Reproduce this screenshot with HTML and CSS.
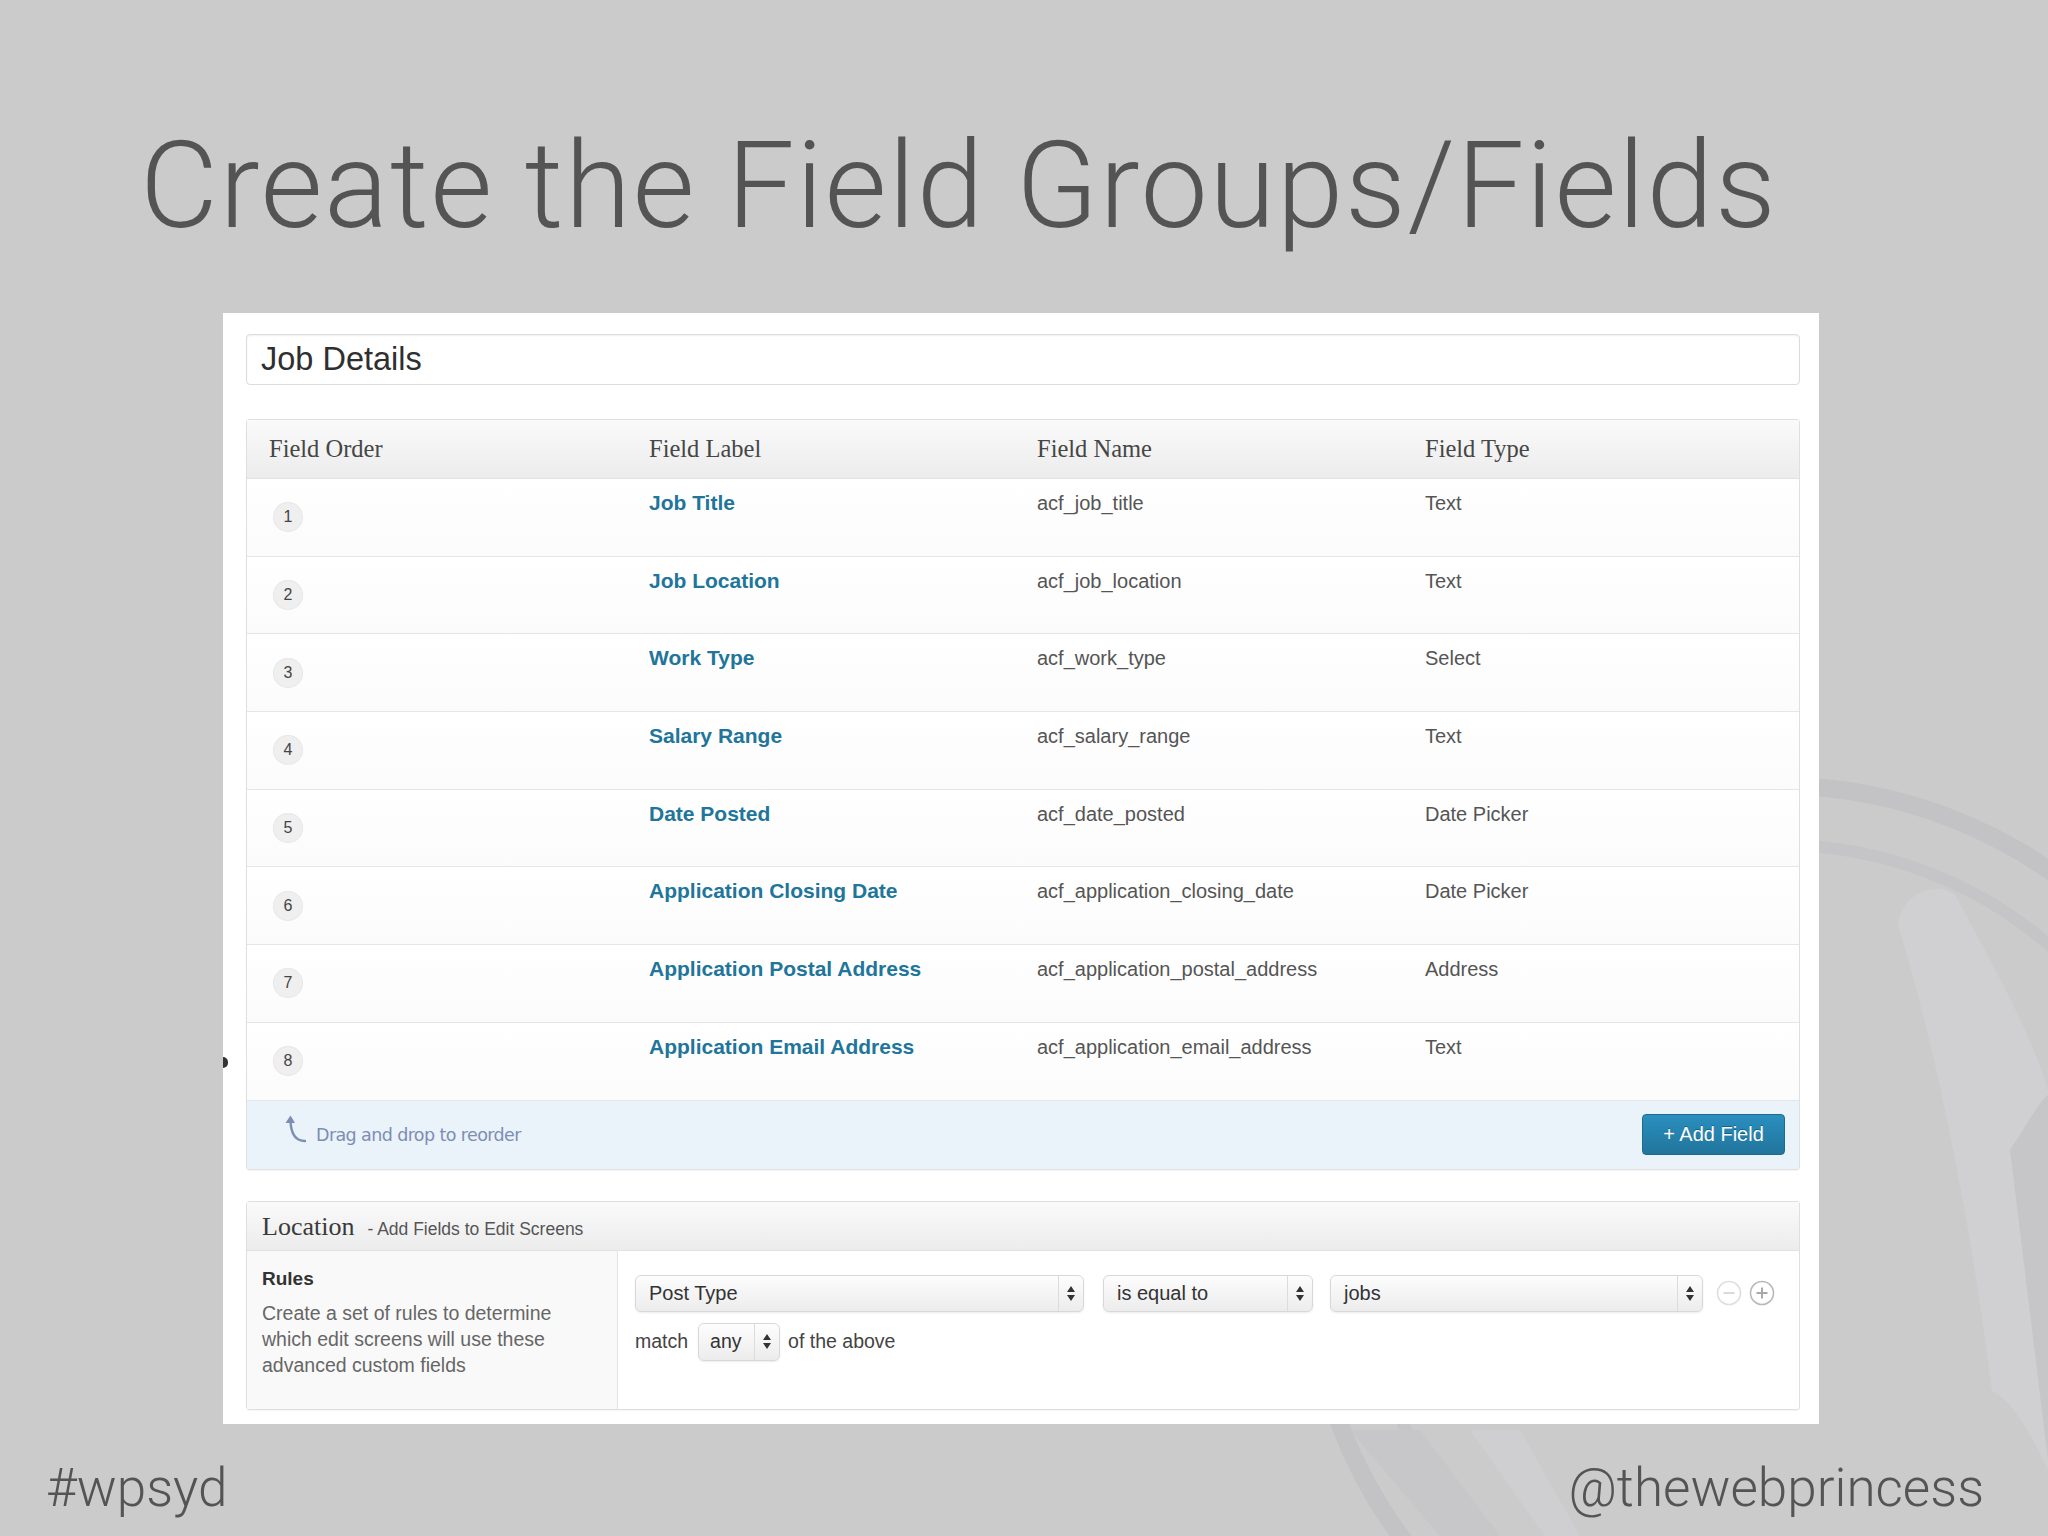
FILE: index.html
```html
<!DOCTYPE html>
<html lang="en">
<head>
<meta charset="utf-8">
<title>Create the Field Groups/Fields</title>
<link rel="stylesheet" href="styles.css">
</head>
<body>
<svg class="watermark" width="2048" height="1536" viewBox="0 0 2048 1536" aria-hidden="true">
  <circle cx="1780" cy="1257" r="471" fill="none" stroke="#c3c3c5" stroke-width="18"/>
  <circle cx="1780" cy="1257" r="412" fill="none" stroke="#c5c5c7" stroke-width="12"/>
  <path d="M1898 925 C1900 895 1935 880 1955 895 C1990 960 2030 1030 2048 1090 L2048 1470 C2025 1420 2005 1395 1992 1392 C1975 1250 1940 1060 1898 925 Z" fill="#d0d0d2"/>
  <path d="M2010 1150 C2030 1120 2040 1100 2048 1095 L2048 1460 Z" fill="#c6c6c8"/>
  <path d="M1350 1430 L1420 1430 L1500 1536 L1440 1536 Z" fill="#c7c7c9"/>
  <path d="M1470 1430 L1520 1430 L1580 1536 L1545 1536 Z" fill="#cfcfd1"/>
</svg>
<main class="slide">
  <h1 class="title">Create the Field Groups/Fields</h1>
  <section class="panel">
    <span class="edge-mark"></span>
    <div class="title-input">Job Details</div>

    <div class="fields">
      <div class="fields-head">
        <div class="cell first">Field Order</div>
        <div class="cell">Field Label</div>
        <div class="cell">Field Name</div>
        <div class="cell">Field Type</div>
      </div>

      <div class="field-row">
        <div class="cell first order"><span class="num">1</span></div>
        <div class="cell label">Job Title</div>
        <div class="cell">acf_job_title</div>
        <div class="cell">Text</div>
      </div>
      <div class="field-row">
        <div class="cell first order"><span class="num">2</span></div>
        <div class="cell label">Job Location</div>
        <div class="cell">acf_job_location</div>
        <div class="cell">Text</div>
      </div>
      <div class="field-row">
        <div class="cell first order"><span class="num">3</span></div>
        <div class="cell label">Work Type</div>
        <div class="cell">acf_work_type</div>
        <div class="cell">Select</div>
      </div>
      <div class="field-row">
        <div class="cell first order"><span class="num">4</span></div>
        <div class="cell label">Salary Range</div>
        <div class="cell">acf_salary_range</div>
        <div class="cell">Text</div>
      </div>
      <div class="field-row">
        <div class="cell first order"><span class="num">5</span></div>
        <div class="cell label">Date Posted</div>
        <div class="cell">acf_date_posted</div>
        <div class="cell">Date Picker</div>
      </div>
      <div class="field-row">
        <div class="cell first order"><span class="num">6</span></div>
        <div class="cell label">Application Closing Date</div>
        <div class="cell">acf_application_closing_date</div>
        <div class="cell">Date Picker</div>
      </div>
      <div class="field-row">
        <div class="cell first order"><span class="num">7</span></div>
        <div class="cell label">Application Postal Address</div>
        <div class="cell">acf_application_postal_address</div>
        <div class="cell">Address</div>
      </div>
      <div class="field-row">
        <div class="cell first order"><span class="num">8</span></div>
        <div class="cell label">Application Email Address</div>
        <div class="cell">acf_application_email_address</div>
        <div class="cell">Text</div>
      </div>

      <div class="fields-foot">
        <div class="drag">
          <svg class="drag-arrow" width="24" height="30" viewBox="0 0 24 30" aria-hidden="true">
            <path d="M22 27 C13 27 8 21 7.5 7" fill="none" stroke="#7d8db4" stroke-width="2.4" stroke-linecap="round"/>
            <path d="M2.5 9 L7.5 1.5 L12 9 Z" fill="#7d8db4"/>
          </svg>
          <span class="drag-text">Drag and drop to reorder</span>
        </div>
        <div class="add-btn">+ Add Field</div>
      </div>
    </div>

    <div class="location">
      <div class="loc-head">
        <span class="loc-title">Location</span>
        <span class="loc-sub">- Add Fields to Edit Screens</span>
      </div>
      <div class="loc-body">
        <div class="rules">
          <div class="rules-title">Rules</div>
          <p class="rules-desc">Create a set of rules to determine<br>which edit screens will use these<br>advanced custom fields</p>
        </div>
        <div class="rule-area">
          <div class="rule-line">
            <div class="select sel-param"><span class="sel-text">Post Type</span><span class="sel-arrow"><svg width="8" height="15" viewBox="0 0 8 15"><path d="M0 6 L4 0 L8 6 Z M0 9 L4 15 L8 9 Z" fill="#333"/></svg></span></div>
            <div class="select sel-op"><span class="sel-text">is equal to</span><span class="sel-arrow"><svg width="8" height="15" viewBox="0 0 8 15"><path d="M0 6 L4 0 L8 6 Z M0 9 L4 15 L8 9 Z" fill="#333"/></svg></span></div>
            <div class="select sel-val"><span class="sel-text">jobs</span><span class="sel-arrow"><svg width="8" height="15" viewBox="0 0 8 15"><path d="M0 6 L4 0 L8 6 Z M0 9 L4 15 L8 9 Z" fill="#333"/></svg></span></div>
            <svg class="round-btn minus" width="26" height="26" viewBox="0 0 26 26" aria-hidden="true">
              <circle cx="13" cy="13" r="11.5" fill="#fff" stroke="#dedede" stroke-width="1.6"/>
              <path d="M7.5 13 H18.5" stroke="#dadada" stroke-width="2"/>
            </svg>
            <svg class="round-btn plus" width="26" height="26" viewBox="0 0 26 26" aria-hidden="true">
              <circle cx="13" cy="13" r="11.5" fill="#fff" stroke="#b9b9b9" stroke-width="1.6"/>
              <path d="M7.5 13 H18.5 M13 7.5 V18.5" stroke="#a9a9a9" stroke-width="2"/>
            </svg>
          </div>
          <div class="match-line">
            <span>match</span>
            <div class="select sel-any"><span class="sel-text">any</span><span class="sel-arrow"><svg width="8" height="15" viewBox="0 0 8 15"><path d="M0 6 L4 0 L8 6 Z M0 9 L4 15 L8 9 Z" fill="#333"/></svg></span></div>
            <span>of the above</span>
          </div>
        </div>
      </div>
    </div>
  </section>
  <footer class="slide-foot">
    <span>#wpsyd</span>
    <span>@thewebprincess</span>
  </footer>
</main>
</body>
</html>
```
FILE: styles.css
```css
body {
  margin: 0;
  width: 2048px;
  height: 1536px;
  overflow: hidden;
  background: #cbcbcb;
  position: relative;
  font-family: "Liberation Sans", Arial, sans-serif;
}

.watermark {
  position: absolute;
  left: 0;
  top: 0;
}

.slide {
  position: relative;
  display: flex;
  flex-direction: column;
  height: 1536px;
}

.title {
  margin: 126px 0 0 140px;
  font-family: Roboto, "Liberation Sans", sans-serif;
  font-weight: 300;
  font-size: 120px;
  line-height: 120px;
  letter-spacing: 1.6px;
  color: #545454;
  white-space: nowrap;
}

.panel {
  position: relative;
  margin: 67px 0 0 223px;
  width: 1596px;
  height: 1111px;
  box-sizing: border-box;
  padding: 21px 19px 0 23px;
  background: #fff;
}

.edge-mark {
  position: absolute;
  left: 0;
  top: 744px;
  width: 5px;
  height: 11px;
  background: #333;
  border-radius: 0 6px 6px 0;
}

.title-input {
  height: 51px;
  box-sizing: border-box;
  border: 1px solid #dcdcdc;
  border-radius: 4px;
  box-shadow: inset 0 1px 2px rgba(0, 0, 0, 0.06);
  padding-left: 14px;
  font-size: 32.5px;
  line-height: 49px;
  color: #2f2f2f;
}

.fields {
  margin-top: 34px;
  border: 1px solid #dfdfdf;
  border-radius: 3px;
  box-shadow: 0 1px 1px rgba(0, 0, 0, 0.04);
}

.fields-head {
  display: grid;
  grid-template-columns: repeat(4, 1fr);
  align-items: center;
  height: 59px;
  box-sizing: border-box;
  border-bottom: 1px solid #e2e2e2;
  background: linear-gradient(#fafafa, #ececec);
  font-family: "Liberation Serif", "Times New Roman", serif;
  font-size: 24.5px;
  color: #464646;
}

.cell {
  padding-left: 14px;
}

.cell.first {
  padding-left: 22px;
}

.field-row {
  display: grid;
  grid-template-columns: repeat(4, 1fr);
  height: 77.7px;
  box-sizing: border-box;
  border-bottom: 1px solid #e6e6e6;
  background: linear-gradient(#ffffff, #fbfbfb);
  padding-top: 12px;
  font-size: 20px;
  line-height: 24px;
  color: #555;
}

.cell.order {
  display: flex;
  align-items: center;
  margin-top: -12px;
}

.num {
  margin-left: 4px;
  width: 30px;
  height: 30px;
  border-radius: 50%;
  background: #efefef;
  box-shadow: inset 0 0 0 1px #e8e8e8;
  display: flex;
  align-items: center;
  justify-content: center;
  font-size: 16px;
  color: #444;
}

.cell.label {
  font-weight: bold;
  font-size: 21px;
  color: #21759b;
}

.fields-foot {
  display: flex;
  align-items: center;
  justify-content: space-between;
  height: 68px;
  box-sizing: border-box;
  padding: 0 14px 0 36px;
  background: #eaf2fa;
}

.drag {
  display: flex;
  align-items: center;
  gap: 9px;
  color: #7d8db4;
}

.drag-arrow {
  margin-top: -12px;
}

.drag-text {
  font-family: "DejaVu Sans", sans-serif;
  font-size: 17.5px;
  letter-spacing: -0.6px;
}

.add-btn {
  width: 143px;
  height: 41px;
  box-sizing: border-box;
  border: 1px solid #1e6a8d;
  border-radius: 4px;
  background: linear-gradient(#2a8fc0, #21759b);
  color: #fff;
  font-size: 20px;
  line-height: 39px;
  text-align: center;
  text-shadow: 0 -1px 0 rgba(0, 0, 0, 0.3);
}

.location {
  margin-top: 31px;
  border: 1px solid #dfdfdf;
  border-radius: 3px;
  box-shadow: 0 1px 1px rgba(0, 0, 0, 0.04);
}

.loc-head {
  display: flex;
  align-items: baseline;
  gap: 13px;
  height: 49px;
  box-sizing: border-box;
  padding: 10px 0 0 15px;
  border-bottom: 1px solid #e2e2e2;
  background: linear-gradient(#fafafa, #ececec);
}

.loc-title {
  font-family: "Liberation Serif", "Times New Roman", serif;
  font-size: 26px;
  color: #3a3a3a;
}

.loc-sub {
  font-size: 17.5px;
  color: #555;
}

.loc-body {
  display: flex;
  height: 158px;
}

.rules {
  width: 371px;
  box-sizing: border-box;
  padding: 16px 0 0 15px;
  background: #f9f9f9;
  border-right: 1px solid #e4e4e4;
}

.rules-title {
  font-weight: bold;
  font-size: 19px;
  line-height: 24px;
  color: #333;
}

.rules-desc {
  margin: 9px 0 0;
  font-size: 19.5px;
  line-height: 26px;
  color: #666;
}

.rule-area {
  flex: 1;
  padding: 24px 0 0 17px;
  display: flex;
  flex-direction: column;
  gap: 11px;
}

.rule-line {
  display: flex;
  align-items: center;
}

.select {
  display: flex;
  align-items: stretch;
  height: 37px;
  box-sizing: border-box;
  border: 1px solid #d8d8d8;
  border-radius: 6px;
  background: linear-gradient(#fdfdfd, #ececec);
  box-shadow: 0 1px 2px rgba(0, 0, 0, 0.08);
  font-size: 20px;
  color: #333;
}

.sel-text {
  flex: 1;
  padding-left: 13px;
  line-height: 35px;
}

.sel-arrow {
  width: 24px;
  border-left: 1px solid #dcdcdc;
  display: flex;
  align-items: center;
  justify-content: center;
}

.sel-param {
  width: 449px;
}

.sel-op {
  width: 210px;
  margin-left: 19px;
}

.sel-val {
  width: 373px;
  margin-left: 17px;
}

.round-btn.minus {
  margin-left: 13px;
}

.round-btn.plus {
  margin-left: 7px;
}

.match-line {
  display: flex;
  align-items: center;
  gap: 8px;
  font-size: 19.5px;
  color: #444;
}

.sel-any {
  width: 82px;
  height: 38px;
  margin-left: 2px;
}

.sel-any .sel-text {
  padding-left: 11px;
  font-size: 19.5px;
}

.slide-foot {
  display: flex;
  justify-content: space-between;
  margin-top: 34px;
  padding: 0 64px 0 46px;
  font-family: Roboto, "Liberation Sans", sans-serif;
  font-weight: 300;
  font-size: 53px;
  line-height: 60px;
  color: #545454;
}
```
